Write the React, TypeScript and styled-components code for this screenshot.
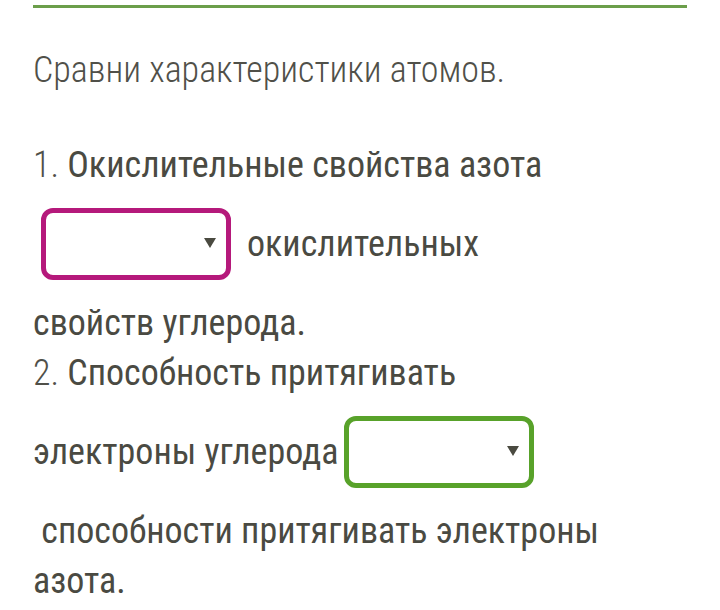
import React from "react";
import styled, { createGlobalStyle } from "styled-components";

const GlobalStyle = createGlobalStyle`
  html, body { margin: 0; padding: 0; background: #ffffff; }
  body {
    font-family: Roboto, "Noto Sans", sans-serif;
    font-stretch: 75%;
    color: #4a4a42;
  }
`;

const Page = styled.div`
  padding: 5px 33px 0;
`;

const Rule = styled.div`
  height: 3px;
  background: #6b9e4a;
`;

const Title = styled.p`
  margin: 37px 0 0;
  font-size: 36px;
  line-height: 50px;
  font-weight: 300;
  color: #505049;
`;

const Question = styled.div`
  margin-top: 45px;
  display: flex;
  flex-direction: column;
  font-size: 36px;
  line-height: 50px;
  font-weight: 400;
`;

const Line = styled.div`
  display: flex;
  align-items: center;
  white-space: pre;
`;

const Num = styled.span`
  font-weight: 300;
  color: #505049;
`;

const SelectWrap = styled.span<{ $lead: number }>`
  position: relative;
  display: inline-flex;
  flex: none;
  width: 190px;
  height: 72px;
  margin: 18px 16px 18px ${(p) => p.$lead}px;
`;

const Select = styled.select<{ $tone: "pink" | "green" }>`
  appearance: none;
  -webkit-appearance: none;
  width: 100%;
  height: 100%;
  margin: 0;
  padding: 0 36px 0 14px;
  box-sizing: border-box;
  background: #ffffff;
  border: 5px solid ${(p) => (p.$tone === "pink" ? "#b5197b" : "#58a22a")};
  border-radius: 12px;
  font: inherit;
  color: inherit;
  outline: none;
`;

const Arrow = styled.svg`
  position: absolute;
  right: 15px;
  top: 50%;
  width: 12px;
  height: 10px;
  margin-top: -6px;
  pointer-events: none;
`;

function Dropdown({ tone, lead }: { tone: "pink" | "green"; lead: number }) {
  return (
    <SelectWrap $lead={lead}>
      <Select $tone={tone} defaultValue="">
        <option value=""></option>
        <option value="больше">больше</option>
        <option value="меньше">меньше</option>
      </Select>
      <Arrow viewBox="0 0 12 10" aria-hidden="true">
        <polygon points="0,0 12,0 6,10" fill="#4a4a40" />
      </Arrow>
    </SelectWrap>
  );
}

export default function App() {
  return (
    <Page>
      <GlobalStyle />
      <Rule />
      <Title>Сравни характеристики атомов.</Title>
      <Question>
        <Line>
          <Num>1. </Num>Окислительные свойства азота
        </Line>
        <Line>
          <Dropdown tone="pink" lead={8} />
          окислительных
        </Line>
        <Line>свойств углерода.</Line>
        <Line>
          <Num>2. </Num>Способность притягивать
        </Line>
        <Line>
          электроны углерода
          <Dropdown tone="green" lead={5} />
        </Line>
        <Line> способности притягивать электроны</Line>
        <Line>азота.</Line>
      </Question>
    </Page>
  );
}
